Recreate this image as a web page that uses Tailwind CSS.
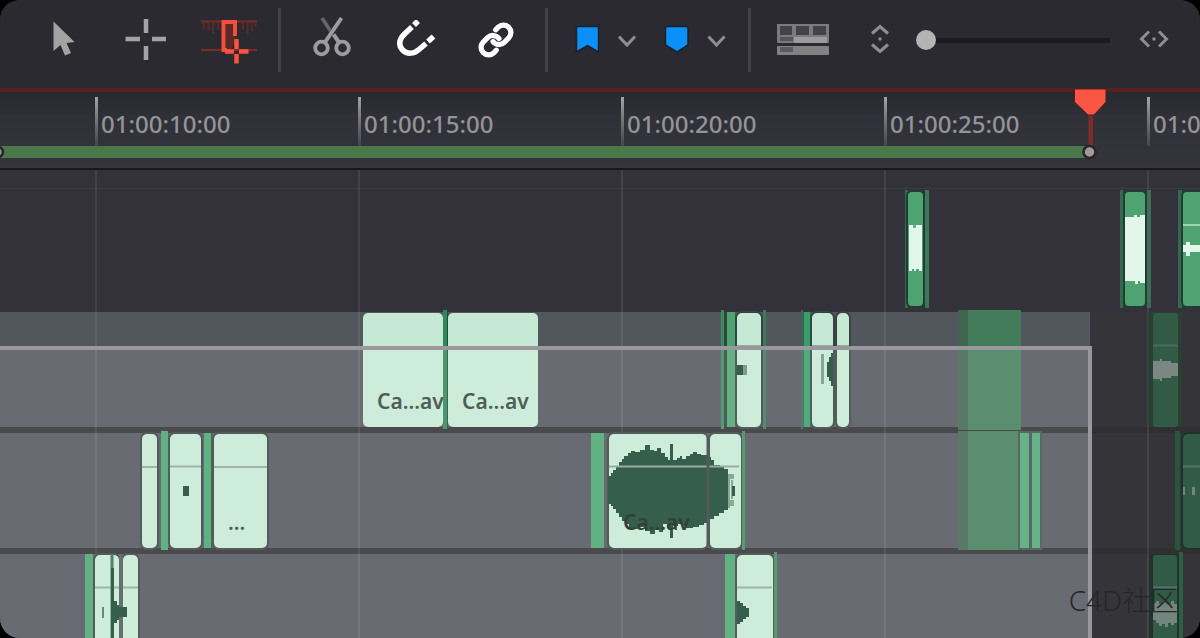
<!DOCTYPE html>
<html lang="en">
<head>
    <meta charset="UTF-8">
    <meta name="viewport" content="width=device-width, initial-scale=1.0">
    <title>Timeline</title>
    <script src="https://cdn.jsdelivr.net/npm/@tailwindcss/browser@4"></script>
</head>
<body class="bg-black font-['Noto_Sans','Open_Sans',sans-serif]">
    <main class="relative flex h-screen flex-col overflow-hidden rounded-[20px] bg-[#2f2f34]">

        <!-- Toolbar -->
        <header class="flex h-[88px] shrink-0 items-center bg-[#2a2a30] pb-2 pl-[21px] pr-[30px]">
            <div class="flex">
                <button type="button" aria-label="Selection mode" class="flex h-16 w-[83px] items-center justify-center">
                    <svg class="h-10 w-10" viewBox="0 0 40 40" fill="#a3a3a4"><path d="M10.500 1.500V31L17.500 25L22 35.500L28 33L23.500 23L31.500 22Z"/></svg>
                </button>
                <button type="button" aria-label="Trim edit mode" class="flex h-16 w-[83px] items-center justify-center">
                    <svg class="h-11 w-11" viewBox="0 0 44 44" stroke="#a3a3a4" stroke-width="4.500" fill="none"><path d="M22 1V15M22 28V42M1.500 21H16M28 21H42"/></svg>
                </button>
                <button type="button" aria-label="Dynamic trim mode" aria-pressed="true" class="flex h-16 w-[83px] items-center justify-center">
                    <svg class="h-12 w-14" viewBox="0 0 56 48" fill="none">
                        <path d="M0 5.500H56M0 34H56" stroke="#7b2c28" stroke-width="2"/>
                        <path d="M3 6V13M7.500 6V15M12 6V18M17 6V14M42 6V14M46.500 6V18M51 6V15M54.500 6V11" stroke="#5a2927" stroke-width="2"/>
                        <path d="M25 8H34V25L30 33H25Z" fill="#5c2927"/>
                        <path d="M34 20V6H22.500V34H26" stroke="#f2503d" stroke-width="4"/>
                        <path d="M35.500 23V33M35.500 38V47.500M24 35.500H33M38 35.500H47.500" stroke="#ff533f" stroke-width="4.500"/>
                    </svg>
                </button>
            </div>
            <div class="ml-2 h-16 w-[3px] bg-[#414147]"></div>
            <div class="ml-[10px] flex">
                <button type="button" aria-label="Blade" class="flex h-16 w-[82px] items-center justify-center">
                    <svg class="h-12 w-10" viewBox="0 0 40 48" fill="none" stroke="#9d9d9e">
                        <circle cx="9.500" cy="32" r="6.300" stroke-width="3.800"/>
                        <circle cx="30.500" cy="32" r="6.300" stroke-width="3.800"/>
                        <path d="M12.500 27L29.500 2" stroke-width="4"/>
                        <path d="M27.500 27L21.500 18.500" stroke-width="4"/>
                        <path d="M18.500 15L10 2" stroke="#66666a" stroke-width="3.500"/>
                    </svg>
                </button>
                <button type="button" aria-label="Snapping" aria-pressed="true" class="flex h-16 w-[82px] items-center justify-center pl-1">
                    <svg class="h-10 w-10" viewBox="0 0 40 40" fill="none" stroke="#fff" stroke-width="5.500">
                        <path d="M16 7L9 13.500C3 19 2 25 6.500 30C11 34.500 18 34 23 29.500L30 23.500"/>
                        <path d="M18 5L22 1M32 21.500L37.500 16.500"/>
                    </svg>
                </button>
                <button type="button" aria-label="Linked selection" aria-pressed="true" class="flex h-16 w-[82px] items-center justify-center">
                    <svg class="h-9 w-9" viewBox="0 0 24 24" fill="none" stroke="#fff" stroke-width="3.500" stroke-linecap="round" stroke-linejoin="round">
                        <path d="M10 13a5 5 0 0 0 7.540.540l3-3a5 5 0 0 0-7.070-7.070l-1.720 1.710"/>
                        <path d="M14 11a5 5 0 0 0-7.540-.540l-3 3a5 5 0 0 0 7.070 7.070l1.710-1.710"/>
                    </svg>
                </button>
            </div>
            <div class="ml-2 h-16 w-[3px] bg-[#414147]"></div>
            <div class="ml-5 flex">
                <button type="button" aria-label="Add flag" class="flex h-16 w-10 items-center justify-center">
                    <svg class="h-8 w-8" viewBox="0 0 32 32"><path d="M4.500 2.500H26.500V28L15.500 21.500L4.500 28Z" fill="#0b90fa" stroke="#17222f" stroke-width="1.500"/></svg>
                </button>
                <button type="button" aria-label="Flag colours" class="flex h-16 w-10 items-center justify-center">
                    <svg class="h-5 w-5" viewBox="0 0 20 20" fill="none" stroke="#8e8e91" stroke-width="3"><path d="M1 6.500L9 15L17 6.500"/></svg>
                </button>
                <button type="button" aria-label="Add marker" class="ml-2 flex h-16 w-10 items-center justify-center">
                    <svg class="h-8 w-8" viewBox="0 0 32 32"><path d="M7 2.500H26Q28 2.500 28 4.500V21L17 28L5.500 21V4.500Q5.500 2.500 7 2.500Z" fill="#0b90fa" stroke="#17222f" stroke-width="1.500"/></svg>
                </button>
                <button type="button" aria-label="Marker colours" class="flex h-16 w-10 items-center justify-center">
                    <svg class="h-5 w-5" viewBox="0 0 20 20" fill="none" stroke="#8e8e91" stroke-width="3"><path d="M2.500 6.500L10.500 15L18.500 6.500"/></svg>
                </button>
            </div>
            <div class="ml-3 h-16 w-[3px] bg-[#414147]"></div>
            <button type="button" aria-label="Timeline view options" class="ml-6 flex h-16 w-[55px] items-center justify-center">
                <svg class="h-8 w-[54px]" viewBox="0 0 54 32">
                    <rect x="1" y="-1" width="52" height="20" rx="1" fill="#7b7b7e"/>
                    <path d="M4 2H16V11H4ZM20 2H33V11H20ZM37 2H50V11H37Z" fill="#434347"/>
                    <path d="M4 13H17V17H4Z" fill="#55555a"/>
                    <path d="M18 13H51V19H18Z" fill="#9b9b9d"/>
                    <rect x="1" y="22" width="52" height="9" rx="1" fill="#828285"/>
                    <path d="M4 23H17V28H4Z" fill="#5b5b60"/>
                </svg>
            </button>
            <button type="button" aria-label="Track height" class="ml-9 flex h-16 w-7 items-center justify-center">
                <svg class="h-8 w-5" viewBox="0 0 20 32" fill="none" stroke="#8e8e91" stroke-width="3"><path d="M2 9.500L10 2.500L18 9.500M2 20.500L10 27.500L18 20.500"/><path d="M8.500 15H11.500"/></svg>
            </button>
            <input type="range" aria-label="Zoom" min="0" max="100" value="0" class="ml-[22px] h-5 min-w-0 flex-1 appearance-none bg-transparent [&::-webkit-slider-runnable-track]:h-[5px] [&::-webkit-slider-runnable-track]:bg-[#1b1b1f] [&::-webkit-slider-thumb]:-mt-2 [&::-webkit-slider-thumb]:h-5 [&::-webkit-slider-thumb]:w-5 [&::-webkit-slider-thumb]:appearance-none [&::-webkit-slider-thumb]:rounded-full [&::-webkit-slider-thumb]:bg-[#b5b4b4]">
            <button type="button" aria-label="Fit timeline" class="ml-7 flex h-16 w-8 items-center justify-center">
                <svg class="h-5 w-[30px]" viewBox="0 0 30 20" fill="none" stroke="#8e8e91" stroke-width="3"><path d="M10 1.500L2.500 9L10 16.500M20 1.500L27.500 9L20 16.500"/><path d="M13.500 9H16.500"/></svg>
            </button>
        </header>

        <!-- Ruler -->
        <section class="relative shrink-0 border-t-4 border-[#56211f] bg-linear-to-b from-[#26292e] via-[#303038] via-30% to-[#34343c]">
            <div class="flex h-[54px] overflow-hidden pl-[95px] pt-[5px] text-2xl font-medium leading-[54px] text-[#949397]">
                <div class="flex w-[263px] shrink-0 gap-[3px]"><i class="w-[3px] bg-linear-to-b from-[#a3a3a5] to-[#45454c]"></i>01:00:10:00</div>
                <div class="flex w-[263px] shrink-0 gap-[3px]"><i class="w-[3px] bg-linear-to-b from-[#a3a3a5] to-[#45454c]"></i>01:00:15:00</div>
                <div class="flex w-[263px] shrink-0 gap-[3px]"><i class="w-[3px] bg-linear-to-b from-[#a3a3a5] to-[#45454c]"></i>01:00:20:00</div>
                <div class="flex w-[263px] shrink-0 gap-[3px]"><i class="w-[3px] bg-linear-to-b from-[#a3a3a5] to-[#45454c]"></i>01:00:25:00</div>
                <div class="flex w-[263px] shrink-0 gap-[3px]"><i class="w-[3px] bg-linear-to-b from-[#a3a3a5] to-[#45454c]"></i>01:00:30:00</div>
            </div>
            <div class="h-3 w-[1089px] bg-[#4b7749]"></div>
            <div class="box-content h-[10px] border-b-2 border-[#18171b]"></div>
            <!-- In point and playhead -->
            <svg class="absolute -left-2 top-[52px] h-4 w-4" viewBox="0 0 16 16"><circle cx="6" cy="8" r="5" fill="#8f8e90" stroke="#25252a" stroke-width="2.500"/></svg>
            <svg class="absolute -top-[4px] left-[1072px] z-20 h-[72px] w-9" viewBox="0 0 36 72">
                <path d="M16.500 24H21V60H16.500Z" fill="#7d2b28"/>
                <path d="M2.500 1H34V14L22 27H16L2.500 14Z" fill="#fa5643" stroke="#4a2022" stroke-width="1"/>
                <circle cx="17.500" cy="64" r="6" fill="#a3999b" stroke="#28262b" stroke-width="2.500"/>
            </svg>
        </section>

        <!-- Tracks -->
        <section class="relative flex flex-1 flex-col gap-[6px] overflow-hidden">

            <div class="relative -mb-[6px] h-[142px] shrink-0 bg-[#33323a] [&>.absolute]:z-10">
                <div class="h-[19px] border-b border-[#3b3a42]"></div>
                <div class="absolute left-[905px] top-5 h-[118px] w-[3px] bg-[#2f6b4c]"></div>
                <div class="absolute left-[908px] top-[22px] h-[114px] w-[15px] rounded bg-[#4fa373] ring-2 ring-[#263b33]">
                    <svg class="h-full w-full" viewBox="0 0 15 114" fill="#e3f6ea"><path d="M1 33H14V79H11V77H8V79H6V77H4V79H1Z"/><path d="M5 33H8V36H5Z" fill="#6fb08a"/></svg>
                </div>
                <div class="absolute left-[925px] top-5 h-[118px] w-[4px] bg-[#39795a]"></div>
                <div class="absolute left-[1120px] top-5 h-[118px] w-[3px] bg-[#2f6b4c]"></div>
                <div class="absolute left-[1125px] top-[22px] h-[114px] w-5 rounded bg-[#4fa373] ring-2 ring-[#263b33]">
                    <svg class="h-full w-full" viewBox="0 0 20 114" fill="#e3f6ea"><path d="M0 25H9V23H12V25H15V23H20V91H15V89H13V92H10V89H0Z"/></svg>
                </div>
                <div class="absolute left-[1147px] top-5 h-[118px] w-[4px] bg-[#3d6f58]"></div>
                <div class="absolute left-[1178px] top-5 h-[118px] w-[4px] bg-[#2f6b4c]"></div>
                <div class="absolute left-[1183px] top-[22px] h-[114px] w-16 rounded bg-[#4fa373] ring-2 ring-[#263b33]">
                    <svg class="h-full w-full" viewBox="0 0 64 114" fill="#e3f6ea"><path d="M0 32H64V34H0Z" fill="#a3d3b6"/><path d="M0 53H3V50H7V53H64V60H7V64H3V60H0Z"/></svg>
                </div>
            </div>

            <div class="relative h-[115px] shrink-0 bg-[#353539] [&>.absolute]:z-10">
                <div class="h-full w-[1090px] bg-[#52565d]"></div>
                <div class="absolute left-[363px] top-px h-[114px] w-20 overflow-hidden rounded-[5px] bg-[#c5e9d4] pl-[14px] pt-[70px] text-[21px] font-semibold leading-9 text-[#35463d]">Ca...av</div>
                <div class="absolute left-[443px] -top-[2px] h-[119px] w-[5px] border-r border-[#2b4439] bg-[#2f875a]"></div>
                <div class="absolute left-[448px] top-px h-[114px] w-[90px] overflow-hidden rounded-[5px] bg-[#c5e9d4] pl-[14px] pt-[70px] text-[21px] font-semibold leading-9 text-[#35463d]">Ca...av</div>

                <div class="absolute left-[721px] -top-[2px] h-[119px] w-[3px] bg-[#3c8a60]"></div>
                <div class="absolute left-[724px] top-0 h-[115px] w-[3px] bg-[#33443f]"></div>
                <div class="absolute left-[727px] top-0 h-[115px] w-2 bg-[#4aa571]"></div>
                <div class="absolute left-[737px] top-px h-[114px] w-6 rounded-[5px] bg-[#c5e9d4] ring-2 ring-[#3b4243]">
                    <svg class="h-full w-full" viewBox="0 0 24 114"><path d="M0 33H24" stroke="#94a89c" stroke-width="2"/><path d="M0 52H6V62H0Z" fill="#174631"/><path d="M6 52H10V62H6Z" fill="#6c8f7c"/></svg>
                </div>
                <div class="absolute left-[763px] -top-[2px] h-[119px] w-[3px] bg-[#3c7a5a]"></div>

                <div class="absolute left-[801px] -top-[2px] h-[119px] w-[2px] bg-[#3a6a52]"></div>
                <div class="absolute left-[804px] top-0 h-[115px] w-[6px] bg-[#35a067]"></div>
                <div class="absolute left-[812px] top-px h-[114px] w-[21px] rounded-[5px] bg-[#c5e9d4] ring-2 ring-[#3b4243]">
                    <svg class="h-full w-full" viewBox="0 0 21 114"><path d="M0 33H21" stroke="#94a89c" stroke-width="2"/><path d="M9 41H12V71H9Z" fill="#799884"/><path d="M21 40V73H19V68H17V64H15V49H17V44H19V40Z" fill="#174631"/></svg>
                </div>
                <div class="absolute left-[837px] top-px h-[114px] w-3 rounded-[5px] bg-[#c5e9d4] ring-2 ring-[#3b4243]">
                    <div class="mt-[32px] h-[2px] bg-[#94a89c]"></div>
                </div>

                <div class="absolute left-[958px] -top-[2px] h-[120px] w-[63px] border-l-[10px] border-[#40654f] bg-[#437c5a]"></div>

                <div class="absolute left-[1148px] top-0 h-[115px] w-[34px] bg-[#26432f]/70"></div>
                <div class="absolute left-[1153px] top-px h-[114px] w-[25px] rounded-[3px] bg-[#315a47]">
                    <svg class="h-full w-full" viewBox="0 0 25 114"><path d="M0 32.500H25" stroke="#4b6b5d" stroke-width="2"/><path d="M0 48H7V46H9V48H18V50H25V63H18V65H9V68H7V66H0Z" fill="#7c8682"/></svg>
                </div>
            </div>

            <div class="relative h-[115px] shrink-0 bg-[#353539] [&>.absolute]:z-10">
                <div class="h-full w-[1090px] bg-[#52565d]"></div>
                <div class="absolute left-[142px] top-px h-[114px] w-[15px] rounded-[5px] bg-[#c5e9d4] ring-2 ring-[#3b4243]">
                    <div class="mt-[32px] h-[2px] bg-[#94a89c]"></div>
                </div>
                <div class="absolute left-[161px] -top-[2px] h-[119px] w-[7px] bg-[#4aa571]"></div>
                <div class="absolute left-[170px] top-px h-[114px] w-[31px] rounded-[5px] bg-[#c5e9d4] ring-2 ring-[#3b4243]">
                    <svg class="h-full w-full" viewBox="0 0 31 114"><path d="M0 32.500H31" stroke="#94a89c" stroke-width="2"/><path d="M13 52H19V62H13Z" fill="#174631"/></svg>
                </div>
                <div class="absolute left-[204px] top-0 h-[115px] w-2 border-r border-[#2d5240] bg-[#4aa571]"></div>
                <div class="absolute left-[214px] top-px h-[114px] w-[53px] rounded-[5px] bg-[#c5e9d4] ring-2 ring-[#3b4243]">
                    <div class="mt-[32px] h-[2px] bg-[#94a89c]"></div>
                    <div class="pl-[14px] pt-[42px] text-[21px] font-semibold leading-6 text-[#35463d]">...</div>
                </div>

                <div class="absolute left-[591px] top-0 h-[115px] w-[13px] bg-[#4aa571]"></div>
                <div class="absolute left-[609px] top-px h-[114px] w-[98px] rounded-[5px] bg-[#c5e9d4] ring-2 ring-[#3b4243]"></div>
                <div class="absolute left-[710px] top-px h-[114px] w-[31px] rounded-[5px] bg-[#c5e9d4] ring-2 ring-[#3b4243]"></div>
                <svg class="absolute left-[608px] top-0 h-[115px] w-[132px]" viewBox="0 0 132 115">
                    <path d="M0 45V43H3V40H5V37H8V33H11V29H14V26H16V23H20V20H23V18H27V19H32V17H37V12H42V17H46V18H49V15H53V20H57V24H60V27H62V11H65V27H69V25H72V23H74V26H78V23H82V21H85V19H89V21H93V22H99V24H103V27H106V32H112V34H116V36H120V77H116V80H111V83H106V86H101V90H96V92H91V94H85V95H78V93H74V91H70V93H65V105H62V95H59V91H55V99H51V97H47V101H42V98H37V94H32V96H27V95H21V91H17V88H14V84H11V80H8V76H5V73H3V71H0Z" fill="#174631"/>
                    <path d="M120 41H122V75H120ZM122 41H126V46H122ZM122 67H126V73H122ZM123 47H125V66H123Z" fill="#7a9b88"/>
                    <path d="M124 53H127V63H124Z" fill="#174631"/>
                    <path d="M1 33.500H131" stroke="#8aa094" stroke-width="2"/>
                    <path d="M100 3V112" stroke="#3b4243" stroke-width="3"/>
                </svg>
                <div class="absolute left-[609px] top-px pl-[14px] pt-[70px] text-[21px] font-semibold leading-9 text-[#15221b]">Ca...av</div>
                <div class="absolute left-[742px] -top-[2px] h-[119px] w-[3px] bg-[#3c8a60]"></div>

                <div class="absolute left-[958px] -top-[2px] h-[119px] w-[60px] border-l-[10px] border-[#40654f] bg-[#437c5a]"></div>
                <div class="absolute left-[1020px] top-0 h-[115px] w-[9px] bg-[#4da877] ring-2 ring-[#43504d]"></div>
                <div class="absolute left-[1032px] top-0 h-[115px] w-2 bg-[#4da877] ring-2 ring-[#43504d]"></div>

                <div class="absolute left-[1175px] -top-[2px] h-[119px] w-[5px] bg-[#28553e]"></div>
                <div class="absolute left-[1183px] top-px h-[114px] w-16 rounded-[5px] bg-[#315a47] ring-2 ring-[#24302b]">
                    <svg class="h-full w-full" viewBox="0 0 64 114"><path d="M0 32.500H64" stroke="#54766a" stroke-width="2"/><path d="M0 53H2V61H0ZM9 53H12V61H9Z" fill="#74857d"/></svg>
                </div>
            </div>

            <div class="relative flex-1 bg-[#353539] [&>.absolute]:z-10">
                <div class="h-full w-[1090px] bg-[#52565d]"></div>
                <div class="absolute -bottom-2 left-[85px] top-0 w-2 bg-[#4aa571]"></div>
                <div class="absolute -bottom-2 left-[95px] top-px w-6 rounded-[5px] bg-[#c5e9d4] ring-2 ring-[#3b4243]"></div>
                <div class="absolute -bottom-2 left-[123px] top-px w-[15px] rounded-[5px] bg-[#c5e9d4] ring-2 ring-[#3b4243]"></div>
                <svg class="absolute left-[95px] top-0 h-[84px] w-11" viewBox="0 0 44 84">
                    <path d="M0 33.500H43" stroke="#94a89c" stroke-width="2"/>
                    <path d="M17 0V84" stroke="#35704f" stroke-width="3"/>
                    <path d="M7 53H9V64H7Z" fill="#527a65"/>
                    <path d="M26 0V84" stroke="#4f5a56" stroke-width="4"/>
                    <path d="M16 14H19V47H22V51H24V53H32V63H24V66H22V69H19V84H16Z" fill="#174631"/>
                </svg>

                <div class="absolute -bottom-2 left-[725px] top-0 w-[10px] bg-[#4aa571]"></div>
                <div class="absolute -bottom-2 left-[737px] top-px w-9 rounded-[5px] bg-[#c5e9d4] ring-2 ring-[#3b4243]">
                    <svg class="h-[84px] w-9" viewBox="0 0 36 84"><path d="M0 32.500H35" stroke="#94a89c" stroke-width="2"/><path d="M0 46H3V48H6V51H9V53H12V62H9V64H6V67H3V69H0Z" fill="#174631"/></svg>
                </div>
                <div class="absolute -bottom-2 -top-[2px] left-[774px] w-[3px] bg-[#3c8a60]"></div>

                <div class="absolute -bottom-2 left-[1149px] top-0 w-[30px] bg-[#24302b]"></div>
                <div class="absolute -bottom-2 left-[1153px] top-px w-6 rounded-[3px] bg-[#315a47]">
                    <svg class="h-[84px] w-6" viewBox="0 0 24 84"><path d="M0 32.500H24" stroke="#54766a" stroke-width="2"/><path d="M0 48H3V46H6V49H10V46H13V49H18V46H21V49H24V68H21V70H18V68H15V72H12V69H9V71H6V68H3V65H0Z" fill="#74857d"/></svg>
                </div>
                <div class="absolute -bottom-2 -top-[2px] left-[1179px] w-1 bg-[#2b6045]"></div>
            </div>

            <!-- Time grid, under the clips -->
            <div class="pointer-events-none absolute inset-0 flex overflow-hidden pl-[95px]">
                <div class="w-[263px] shrink-0 border-l-2 border-white/8"></div>
                <div class="w-[263px] shrink-0 border-l-2 border-white/8"></div>
                <div class="w-[263px] shrink-0 border-l-2 border-white/8"></div>
                <div class="w-[263px] shrink-0 border-l-2 border-white/8"></div>
                <div class="w-[263px] shrink-0 border-l-2 border-white/8"></div>
            </div>

            <!-- Selection marquee -->
            <div class="pointer-events-none absolute -bottom-1 left-0 top-[176px] z-20 w-[1092px] border-r-4 border-t-4 border-[#98989e] bg-white/13"></div>
        </section>

        <p class="absolute bottom-[18px] right-[22px] z-30 font-['Noto_Sans','Noto_Sans_CJK_SC',sans-serif] text-[28px] font-light leading-10 text-[#252628]">C4D社区</p>
    </main>
</body>
</html>
